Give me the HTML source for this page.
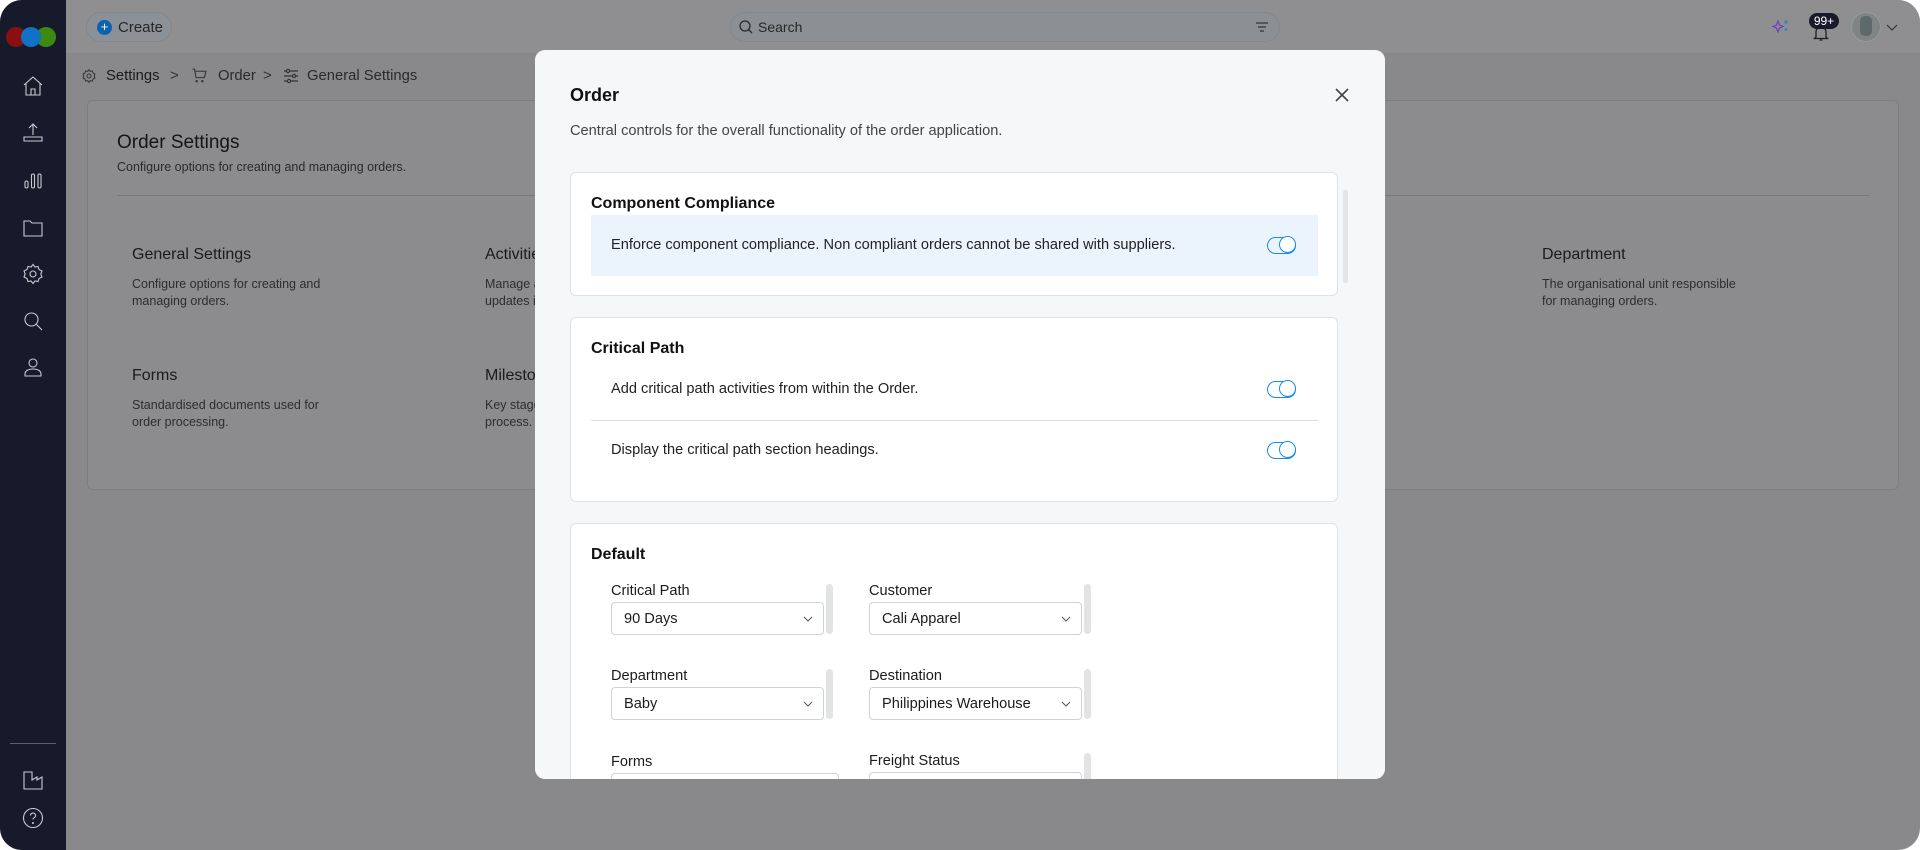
<!DOCTYPE html>
<html><head><meta charset="utf-8"><style>
*{box-sizing:border-box;margin:0;padding:0}
body{width:1920px;height:850px;background:#fff;font-family:"Liberation Sans",sans-serif;position:relative;overflow:hidden;color:#1b1b1b}
.win{position:absolute;left:0;top:0;width:1920px;height:850px;border-radius:22px;overflow:hidden;background:#89898b}
.side{position:absolute;left:0;top:0;width:66px;height:850px;background:#161a2b}
.top{position:absolute;left:66px;top:0;right:0;height:54px;background:#8f8f91;border-bottom:1px solid #858587}
.ic{position:absolute;left:21px;width:24px;height:24px}
.ab{position:absolute}
.t{position:absolute;white-space:nowrap}
.modal{position:absolute;left:535px;top:50px;width:850px;height:729px;background:#f6f7f9;border-radius:10px;overflow:hidden}
.card{position:absolute;left:35px;width:768px;background:#fff;border:1px solid #dfe1e4;border-radius:6px}
.tog{position:absolute;width:29px;height:17px;border:1.6px solid #1a8bea;border-radius:9px}
.tog:after{content:"";position:absolute;right:-1px;top:-1.6px;width:17px;height:17px;border:1.6px solid #1a8bea;border-radius:50%;box-sizing:border-box;background:#fff}
.sel{position:absolute;width:213px;height:33px;border:1px solid #cfd2d6;border-radius:4px;background:#fff;font-size:14.6px;padding:8px 0 0 12px}
.sel svg{position:absolute;right:10px;top:13px}
.lab{position:absolute;font-size:14.6px;color:#1b1b1b}
.sb{position:absolute;width:7px;height:50px;background:#e2e3e5;border-radius:4px}
.mt{font-size:14.6px}
</style></head><body><div class="win">
<div class="side">
 <div class="ab" style="left:6px;top:27px;width:20px;height:20px;border-radius:50%;background:#8a0f10"></div>
 <div class="ab" style="left:36px;top:27px;width:20px;height:20px;border-radius:50%;background:#3d8a12"></div>
 <div class="ab" style="left:21px;top:27px;width:20px;height:20px;border-radius:50%;background:#0f72c6"></div>
 <svg class="ic" style="top:74px" viewBox="0 0 24 24" fill="none" stroke="#c9cad0" stroke-width="1.1"><path d="M3 11L12 3l9 8M5 9.5V21h14V9.5M10 21v-6h4v6"/></svg>
 <svg class="ic" style="top:121px" viewBox="0 0 24 24" fill="none" stroke="#c9cad0" stroke-width="1.1"><path d="M12 14V3M8 7l4-4 4 4M3 16h18v4H3z"/></svg>
 <svg class="ic" style="top:168px" viewBox="0 0 24 24" fill="none" stroke="#c9cad0" stroke-width="1.1"><rect x="4" y="13" width="3" height="7" rx="1.5"/><rect x="10.5" y="6" width="3" height="14" rx="1.5"/><rect x="17" y="6" width="3" height="14" rx="1.5"/></svg>
 <svg class="ic" style="top:216px" viewBox="0 0 24 24" fill="none" stroke="#c9cad0" stroke-width="1.1"><path d="M3 5h6l2 2h10v13H3z"/></svg>
 <svg class="ic" style="top:262px" viewBox="0 0 24 24" fill="none" stroke="#c9cad0" stroke-width="1.1"><circle cx="12" cy="12" r="3"/><path d="M12 2.5l2 2.5 3-.5 1 3 3 1.5-1.2 3 1.2 3-3 1.5-1 3-3-.5-2 2.5-2-2.5-3 .5-1-3-3-1.5 1.2-3L3 9l3-1.5 1-3 3 .5z"/></svg>
 <svg class="ic" style="top:309px" viewBox="0 0 24 24" fill="none" stroke="#c9cad0" stroke-width="1.1"><circle cx="10.5" cy="10.5" r="6.5"/><path d="M15.5 15.5L21 21"/></svg>
 <svg class="ic" style="top:355px" viewBox="0 0 24 24" fill="none" stroke="#c9cad0" stroke-width="1.1"><circle cx="12" cy="8" r="4"/><path d="M4 21v-2c0-3 3-5 8-5s8 2 8 5v2z"/></svg>
 <div class="ab" style="left:10px;top:743px;width:46px;height:1px;background:#5d6070"></div>
 <svg class="ic" style="top:768px" viewBox="0 0 24 24" fill="none" stroke="#c9cad0" stroke-width="1.1"><path d="M3 4v17h18V9l-5 3V9l-5 3V4z"/></svg>
 <svg class="ic" style="top:806px" viewBox="0 0 24 24" fill="none" stroke="#c9cad0" stroke-width="1.1"><circle cx="12" cy="12" r="9.5"/><path d="M9.5 9.5a2.5 2.5 0 1 1 3.5 2.3c-.7.4-1 .9-1 1.7"/><circle cx="12" cy="17" r=".5"/></svg>
</div>
<div class="top">
 <div class="ab" style="left:20px;top:12px;width:86px;height:30px;border-radius:15px;background:#8c9197;border:1px solid #82878d"></div>
 <div class="ab" style="left:31px;top:20px;width:15px;height:15px;border-radius:50%;background:#0a62b0;color:#fff;font-size:13px;line-height:14px;text-align:center">+</div>
 <div class="t" style="left:52px;top:19px;font-size:15px;color:#262626">Create</div>
 <div class="ab" style="left:664px;top:12px;width:550px;height:30px;border-radius:15px;background:#8c9094;border:1px solid #83878b"></div>
 <svg class="ab" style="left:672px;top:19px" width="16" height="16" viewBox="0 0 16 16" fill="none" stroke="#2a2a2a" stroke-width="1.3"><circle cx="7" cy="7" r="5"/><path d="M10.5 10.5L14 14"/></svg>
 <div class="t" style="left:692px;top:19px;font-size:14px;color:#262626">Search</div>
 <svg class="ab" style="left:1189px;top:20px" width="14" height="14" viewBox="0 0 14 14" stroke="#333" stroke-width="1.2"><path d="M1 3h12M3 7h8M5 11h4"/></svg>
 <svg class="ab" style="left:1705px;top:17px" width="20" height="20" viewBox="0 0 20 20" fill="none"><path d="M7 4l1.5 4L12 9.5 8.5 11 7 15l-1.5-4L2 9.5 5.5 8z" stroke="#6b3fc5" stroke-width="1.2"/><path d="M15 3v4M13 5h4M15 11v3M13.5 12.5h3" stroke="#2a7fd0" stroke-width="1.2"/></svg>
 <svg class="ab" style="left:1746px;top:24px" width="18" height="18" viewBox="0 0 18 18" fill="none" stroke="#1e1e1e" stroke-width="1.3"><path d="M4 13V8a5 5 0 0 1 10 0v5l1.5 1.5h-13zM7.5 16h3"/></svg>
 <div class="ab" style="left:1743px;top:13px;width:30px;height:16px;border-radius:8px;background:#161a2b;color:#fff;font-size:12px;line-height:16px;text-align:center">99+</div>
 <div class="ab" style="left:1785px;top:12px;width:30px;height:30px;border-radius:50%;background:#7f8582;border:1px solid #9a9a9a"></div>
 <div class="ab" style="left:1794px;top:16px;width:12px;height:20px;border-radius:5px;background:#5d6a6a"></div>
 <svg class="ab" style="left:1820px;top:22px" width="12" height="10" viewBox="0 0 12 10" fill="none" stroke="#333" stroke-width="1.2"><path d="M1 3l5 5 5-5"/></svg>
</div>
<svg class="ab" style="left:81px;top:68px" width="16" height="16" viewBox="0 0 24 24" fill="none" stroke="#333" stroke-width="1.5"><circle cx="12" cy="12" r="3"/><path d="M12 2.5l2 2.5 3-.5 1 3 3 1.5-1.2 3 1.2 3-3 1.5-1 3-3-.5-2 2.5-2-2.5-3 .5-1-3-3-1.5 1.2-3L3 9l3-1.5 1-3 3 .5z"/></svg>
<div class="t" style="left:106px;top:68px;font-size:14.8px;color:#1b1b1b">Settings</div>
<div class="t" style="left:170px;top:67px;font-size:15px;color:#333">&gt;</div>
<svg class="ab" style="left:191px;top:67px" width="17" height="17" viewBox="0 0 24 24" fill="none" stroke="#333" stroke-width="1.5"><path d="M2 3h3l2 12h12l2-9H6M9 20a1 1 0 1 0 0 .1M17 20a1 1 0 1 0 0 .1"/></svg>
<div class="t" style="left:218px;top:68px;font-size:14.8px;color:#2a2a2a">Order</div>
<div class="t" style="left:263px;top:67px;font-size:15px;color:#333">&gt;</div>
<svg class="ab" style="left:283px;top:68px" width="16" height="16" viewBox="0 0 16 16" fill="none" stroke="#333" stroke-width="1.2"><path d="M1 3h14M1 8h14M1 13h14"/><circle cx="5" cy="3" r="1.6" fill="#8a8a8c"/><circle cx="11" cy="8" r="1.6" fill="#8a8a8c"/><circle cx="6" cy="13" r="1.6" fill="#8a8a8c"/></svg>
<div class="t" style="left:307px;top:68px;font-size:14.8px;color:#2a2a2a">General Settings</div>
<div class="ab" style="left:87px;top:100px;width:1812px;height:390px;border:1px solid #7e7e80;border-radius:6px;background:#8c8c8e"></div>
<div class="t" style="left:117px;top:132px;font-size:19px;color:#151515">Order Settings</div>
<div class="t" style="left:117px;top:160px;font-size:12.5px;color:#2a2a2a">Configure options for creating and managing orders.</div>
<div class="ab" style="left:117px;top:195px;width:1752px;height:1px;background:#78787a"></div>
<div class="t" style="left:132px;top:246px;font-size:16px">General Settings</div>
<div class="t" style="left:132px;top:276px;font-size:12.5px;color:#2d2d2d;line-height:16.5px">Configure options for creating and<br>managing orders.</div>
<div class="t" style="left:485px;top:246px;font-size:16px">Activities</div>
<div class="t" style="left:485px;top:276px;font-size:12.5px;color:#2d2d2d;line-height:16.5px">Manage activities and<br>updates in orders.</div>
<div class="t" style="left:1189px;top:276px;font-size:12.5px;color:#2d2d2d;line-height:16.5px">Manage settings related to<br>the order configuration.</div>
<div class="t" style="left:1542px;top:246px;font-size:16px">Department</div>
<div class="t" style="left:1542px;top:276px;font-size:12.5px;color:#2d2d2d;line-height:16.5px">The organisational unit responsible<br>for managing orders.</div>
<div class="t" style="left:132px;top:367px;font-size:16px">Forms</div>
<div class="t" style="left:132px;top:397px;font-size:12.5px;color:#2d2d2d;line-height:16.5px">Standardised documents used for<br>order processing.</div>
<div class="t" style="left:485px;top:367px;font-size:16px">Milestones</div>
<div class="t" style="left:485px;top:397px;font-size:12.5px;color:#2d2d2d;line-height:16.5px">Key stages in the order<br>process.</div>
<div class="t" style="left:1189px;top:397px;font-size:12.5px;color:#2d2d2d;line-height:16.5px">Items that are tracked</div>

<div class="modal">
 <div class="t" style="left:35px;top:35px;font-size:18px;font-weight:bold;color:#111">Order</div>
 <svg class="ab" style="left:799px;top:37px" width="16" height="16" viewBox="0 0 16 16" stroke="#444" stroke-width="1.6"><path d="M2 2l12 12M14 2L2 14"/></svg>
 <div class="t mt" style="left:35px;top:73px;color:#444">Central controls for the overall functionality of the order application.</div>
 <div class="sb" style="left:808px;top:140px;width:5px;height:93px;background:#e4e5e7"></div>
 <div class="card" style="top:122px;height:124px">
  <div class="t" style="left:20px;top:22px;font-size:16px;font-weight:bold;color:#111">Component Compliance</div>
  <div class="ab" style="left:20px;top:42px;width:727px;height:61px;background:#ebf4fd"></div>
  <div class="t mt" style="left:40px;top:64px;color:#222">Enforce component compliance. Non compliant orders cannot be shared with suppliers.</div>
  <div class="tog" style="left:696px;top:64px"></div>
 </div>
 <div class="card" style="top:267px;height:185px">
  <div class="t" style="left:20px;top:22px;font-size:16px;font-weight:bold;color:#111">Critical Path</div>
  <div class="t mt" style="left:40px;top:63px;color:#222">Add critical path activities from within the Order.</div>
  <div class="tog" style="left:696px;top:63px"></div>
  <div class="ab" style="left:20px;top:102px;width:727px;height:1px;background:#dcdee1"></div>
  <div class="t mt" style="left:40px;top:124px;color:#222">Display the critical path section headings.</div>
  <div class="tog" style="left:696px;top:124px"></div>
 </div>
 <div class="card" style="top:473px;height:300px">
  <div class="t" style="left:20px;top:22px;font-size:16px;font-weight:bold;color:#111">Default</div>
  <div class="lab" style="left:40px;top:59px">Critical Path</div>
  <div class="sel" style="left:40px;top:78px">90 Days<svg width="10" height="6" viewBox="0 0 10 6" fill="none" stroke="#555"><path d="M1 1l4 4 4-4"/></svg></div>
  <div class="sb" style="left:255px;top:60px"></div>
  <div class="lab" style="left:298px;top:59px">Customer</div>
  <div class="sel" style="left:298px;top:78px">Cali Apparel<svg width="10" height="6" viewBox="0 0 10 6" fill="none" stroke="#555"><path d="M1 1l4 4 4-4"/></svg></div>
  <div class="sb" style="left:513px;top:60px"></div>
  <div class="lab" style="left:40px;top:144px">Department</div>
  <div class="sel" style="left:40px;top:163px">Baby<svg width="10" height="6" viewBox="0 0 10 6" fill="none" stroke="#555"><path d="M1 1l4 4 4-4"/></svg></div>
  <div class="sb" style="left:255px;top:145px"></div>
  <div class="lab" style="left:298px;top:144px">Destination</div>
  <div class="sel" style="left:298px;top:163px">Philippines Warehouse<svg width="10" height="6" viewBox="0 0 10 6" fill="none" stroke="#555"><path d="M1 1l4 4 4-4"/></svg></div>
  <div class="sb" style="left:513px;top:145px"></div>
  <div class="lab" style="left:40px;top:230px">Forms</div>
  <div class="sel" style="left:40px;top:249px;width:228px"></div>
  <div class="lab" style="left:298px;top:229px">Freight Status</div>
  <div class="sel" style="left:298px;top:248px"></div>
  <div class="sb" style="left:513px;top:229px"></div>
 </div>
</div>
</div></body></html>
